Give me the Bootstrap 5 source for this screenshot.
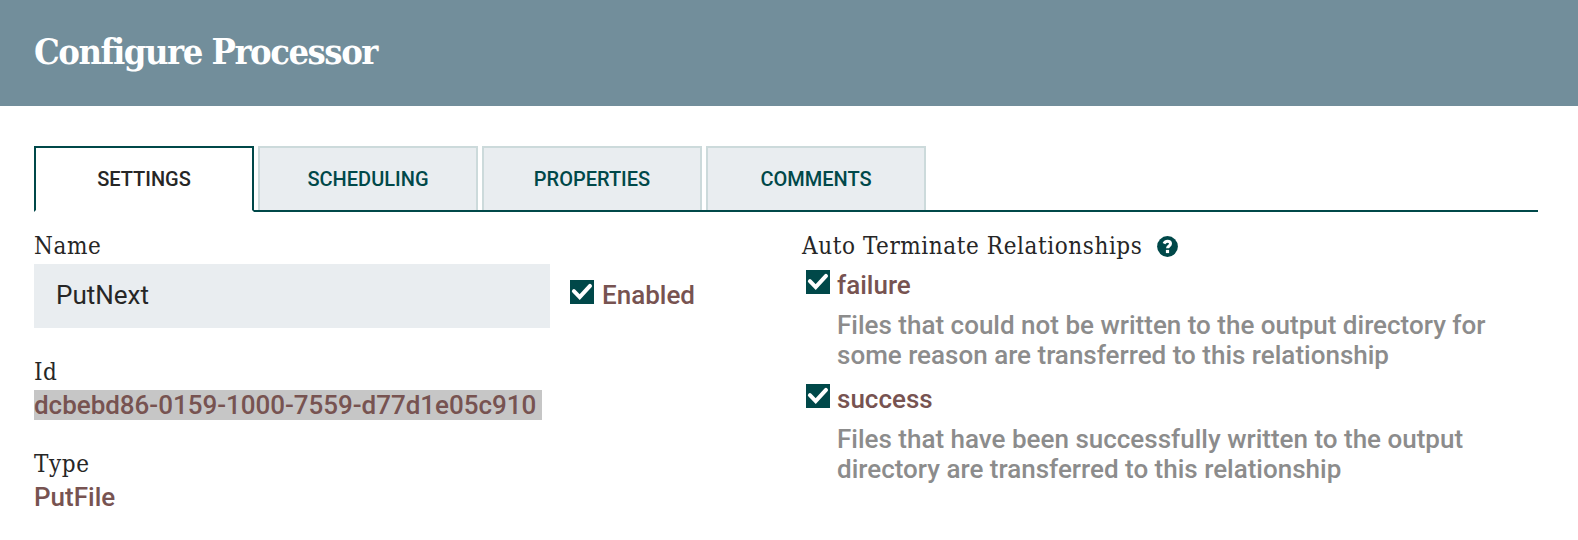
<!DOCTYPE html>
<html lang="en">
<head>
<meta charset="utf-8">
<meta name="viewport" content="width=device-width, initial-scale=1">
<title>Configure Processor</title>
<link href="https://cdn.jsdelivr.net/npm/bootstrap@5.3.0/dist/css/bootstrap.min.css" rel="stylesheet">
<style>
  body { font: 500 26px/30px Roboto, sans-serif; color: #262626; overflow: hidden; }
  .slab { font-family: "Roboto Slab", "DejaVu Serif Condensed", "DejaVu Serif", serif; font-stretch: condensed; }
  .dialog-header { height: 106px; background: #728e9b; padding: 0 34px 5px; }
  .dialog-title { font-size: 36px; line-height: 42px; font-weight: 700; letter-spacing: -1.47px; }
  .dialog-body { padding: 40px 40px 0 34px; }
  .nav-tabs { --bs-nav-tabs-border-width: 0; height: 66px; gap: 4px; border-bottom: 2px solid #004849; }
  .nav-tabs .nav-link { width: 220px; height: 64px; margin: 0; padding: 0; border: 2px solid #ccdadb; border-bottom: 0; border-radius: 0; background: #e9edf0; color: #004849; font-size: 20px; line-height: 62px; }
  .nav-tabs .nav-link.active { height: 66px; border-color: #004849; border-bottom: 2px solid #fff; background: #fff; color: #262626; }
  .field-label { font-size: 24px; line-height: 28px; font-weight: 400; letter-spacing: .58px; }
  .left-pane { width: 768px; padding-top: 20px; }
  .right-pane { width: 736px; padding-top: 20px; }
  .name-row { margin: 4px 0 30px; }
  .name-input { width: 516px; height: 64px; border: 0; border-radius: 0; background: #e9edf0 !important; color: #262626; font-size: 26px; font-weight: 400; padding: 0 22px 2px; }
  .enabled-box { padding: 16px 0 0 20px; gap: 8px; }
  .value { color: #775351; }
  .id-value { background: #c6c6c6; width: 508px; margin: 4px 0 30px; white-space: nowrap; letter-spacing: -.03px; }
  .check { width: 24px; height: 24px; flex: none; }
  .relationships { padding: 10px 0 0 4px; }
  .relation { gap: 7px; }
  .label-help { gap: 15px; }
  .desc { color: #8c8c8c; margin: 10px 0 14px 31px; white-space: nowrap; }
</style>
</head>
<body>
<header class="dialog-header d-flex align-items-center text-white">
  <h1 class="dialog-title slab m-0">Configure Processor</h1>
</header>
<svg class="d-none"><symbol id="tick" viewBox="0 0 24 24"><path fill="#004849" d="M0 0h24v24H0z"/><path d="M3.9 11.2l5.8 6L20 5.9" fill="none" stroke="#fff" stroke-width="4" stroke-linecap="round"/></symbol></svg>
<main class="dialog-body">
  <nav class="nav nav-tabs">
    <a class="nav-link active text-center">SETTINGS</a>
    <a class="nav-link text-center">SCHEDULING</a>
    <a class="nav-link text-center">PROPERTIES</a>
    <a class="nav-link text-center">COMMENTS</a>
  </nav>
  <div class="d-flex">
    <section class="left-pane">
      <div class="field-label slab">Name</div>
      <div class="name-row d-flex">
        <input class="form-control name-input" value="PutNext" aria-label="Name">
        <div class="enabled-box d-flex value"><svg class="check"><use href="#tick"/></svg><span>Enabled</span></div>
      </div>
      <div class="field-label slab">Id</div>
      <div class="value id-value">dcbebd86-0159-1000-7559-d77d1e05c910</div>
      <div class="field-label slab mb-1">Type</div>
      <div class="value">PutFile</div>
    </section>
    <section class="right-pane">
      <div class="d-flex align-items-center field-label label-help slab"><span>Auto Terminate Relationships</span>
        <svg width="21" height="21" viewBox="0 0 21 21"><circle cx="10.5" cy="10.5" r="10.4" fill="#004849"/><path d="M7 7.7C7.8 6.1 8.9 5.3 10.5 5.3c1.7 0 3 1 3 2.5 0 2.1-3 2.2-3 4.5" fill="none" stroke="#fff" stroke-width="3"/><path d="M8.9 13.9h3.2v3.2H8.9z" fill="#fff"/></svg>
      </div>
      <div class="relationships">
        <div class="relation d-flex value"><svg class="check"><use href="#tick"/></svg><span>failure</span></div>
        <div class="desc">Files that could not be written to the output directory for<br>some reason are transferred to this relationship</div>
        <div class="relation d-flex value"><svg class="check"><use href="#tick"/></svg><span>success</span></div>
        <div class="desc">Files that have been successfully written to the output<br>directory are transferred to this relationship</div>
      </div>
    </section>
  </div>
</main>
<script src="https://cdn.jsdelivr.net/npm/bootstrap@5.3.0/dist/js/bootstrap.bundle.min.js"></script>
</body>
</html>
